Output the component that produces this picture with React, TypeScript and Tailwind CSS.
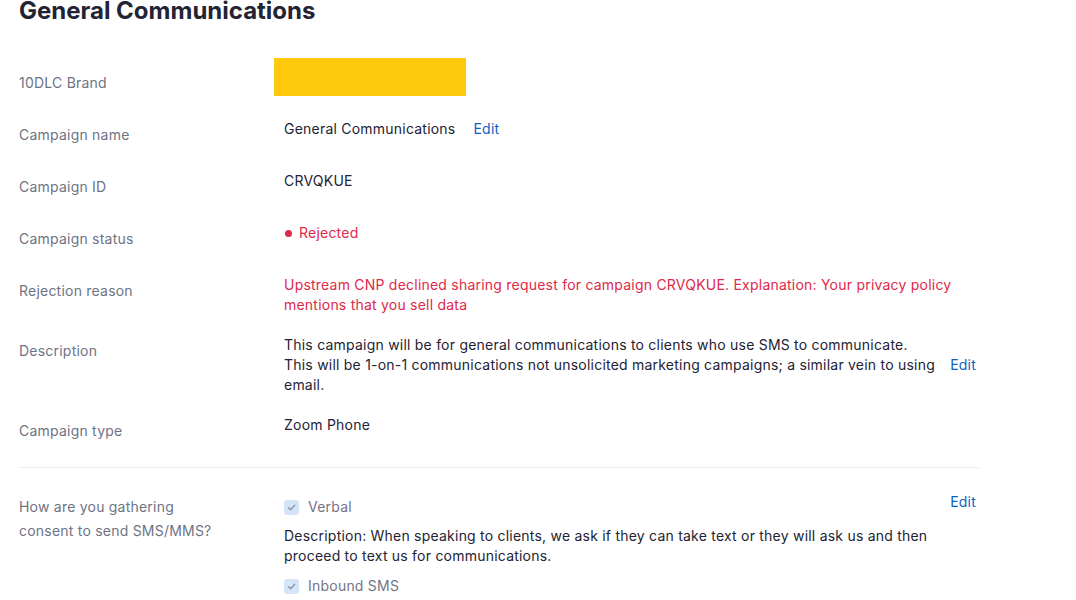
import React from 'react';

const font = { fontFamily: 'Inter, "Noto Sans", sans-serif' };

function Row({ label, children }: { label: React.ReactNode; children: React.ReactNode }) {
  return (
    <div className="flex items-start">
      <div className="w-[265px] shrink-0 text-[14px] leading-8 text-[#6e7385]">{label}</div>
      <div className="min-w-0 flex-1 text-[14px] leading-5 text-[#232333]">{children}</div>
    </div>
  );
}

function Edit() {
  return <a className="text-[14px] leading-5 text-[#0e5fc2] cursor-pointer">Edit</a>;
}

function Check({ label }: { label: string }) {
  return (
    <div className="flex items-center gap-[9px] leading-5">
      <span className="flex h-[15px] w-[15px] items-center justify-center rounded-[3px] bg-[#d6e4f7]">
        <svg width="11" height="11" viewBox="0 0 10 10" fill="none">
          <path d="M2.2 5.2 4.2 7.1 7.9 3" stroke="#8894a8" strokeWidth="1.2" strokeLinecap="round" strokeLinejoin="round" />
        </svg>
      </span>
      <span className="text-[14px] text-[#747487]">{label}</span>
    </div>
  );
}

export default function App() {
  return (
    <div className="h-[600px] w-[1076px] overflow-hidden bg-white tracking-[0.22px]" style={font}>
      <div className="w-[979px] pl-[19px]">
        <h1 className="-mt-[3px] text-[24px] font-bold leading-7 tracking-normal text-[#232333]">General Communications</h1>

        <div className="mt-[42px] flex flex-col gap-5">
          <Row label="10DLC Brand">
            <div className="relative h-5">
              <div className="absolute -left-[10px] -top-[9px] h-[38px] w-[192px] bg-[#ffc90e]" />
            </div>
          </Row>
          <Row label="Campaign name">
            <span>General Communications</span>
            <span className="ml-[18px]">
              <Edit />
            </span>
          </Row>
          <Row label="Campaign ID">CRVQKUE</Row>
          <Row label="Campaign status">
            <div className="flex items-center gap-[7px] text-[#e0284a]">
              <span className="ml-px h-[7px] w-[7px] rounded-full bg-[#e0284a]" />
              <span>Rejected</span>
            </div>
          </Row>
          <Row label="Rejection reason">
            <p className="text-[#e0284a]">
              Upstream CNP declined sharing request for campaign CRVQKUE. Explanation: Your privacy policy mentions that you sell data
            </p>
          </Row>
          <Row label="Description">
            <div className="flex items-center">
              <p className="w-[652px]">
                This campaign will be for general communications to clients who use SMS to communicate.
                <br />
                This will be 1-on-1 communications not unsolicited marketing campaigns; a similar vein to using email.
              </p>
              <span className="ml-auto mr-[3px]">
                <Edit />
              </span>
            </div>
          </Row>
          <Row label="Campaign type">Zoom Phone</Row>
        </div>

        <div className="mt-5 h-px bg-[#ebebef]" />

        <div className="flex items-start pt-[24px]">
          <div className="mt-[3px] w-[265px] shrink-0 text-[14px] leading-6 text-[#6e7385]">
            How are you gathering
            <br />
            consent to send SMS/MMS?
          </div>
          <div className="mt-[5px] w-[650px] text-[14px] leading-5 text-[#232333]">
            <Check label="Verbal" />
            <p className="mt-[9px]">
              Description: When speaking to clients, we ask if they can take text or they will ask us and then proceed to text
              us for communications.
            </p>
            <div className="mt-[10px]">
              <Check label="Inbound SMS" />
            </div>
          </div>
          <span className="-mt-[3px] ml-auto mr-[3px]">
            <Edit />
          </span>
        </div>
      </div>
    </div>
  );
}
